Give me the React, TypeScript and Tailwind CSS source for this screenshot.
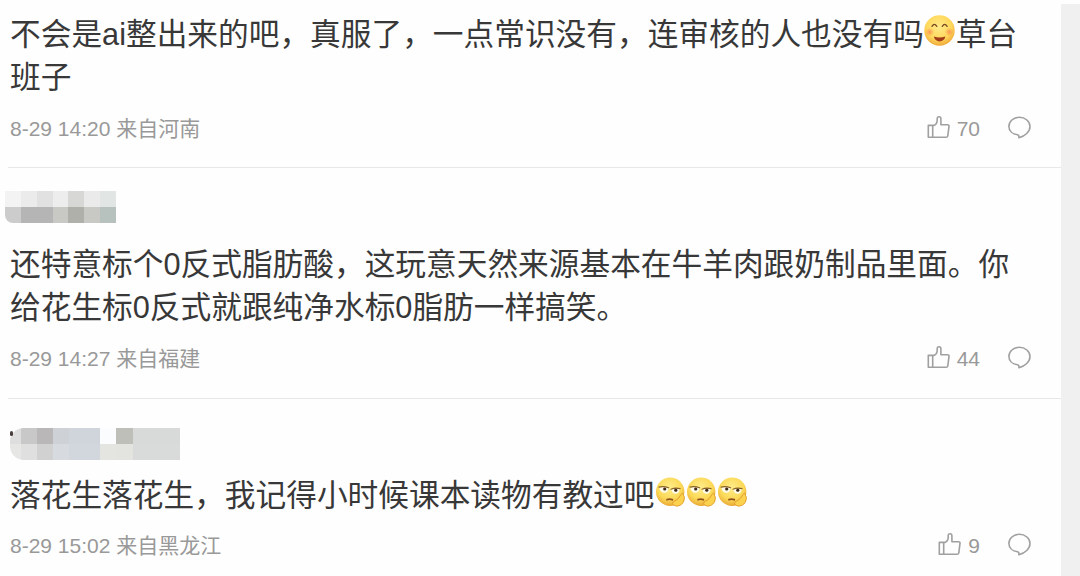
import React from 'react';
import { clsx } from 'clsx';

// --- Types ---
type Comment = {
  id: string;
  name?: React.ReactNode;
  body: React.ReactNode;
  meta: string;
  likes: number;
  className: string;
};

// --- Emoji ---
function SmileEmoji() {
  return (
    <svg viewBox="0 0 31 31" className="inline-block w-[31px] h-[31px] mr-px align-[-1px]">
      <defs>
        <radialGradient id="smile-face" cx="0.48" cy="0.38" r="0.62">
          <stop offset="0" stopColor="#ffe98a" />
          <stop offset="0.65" stopColor="#ffd95c" />
          <stop offset="1" stopColor="#f0a93a" />
        </radialGradient>
        <radialGradient id="smile-cheek">
          <stop offset="0" stopColor="#fa8752" stopOpacity="0.85" />
          <stop offset="1" stopColor="#fa9a52" stopOpacity="0" />
        </radialGradient>
      </defs>
      <circle cx="15.5" cy="15.5" r="15.2" fill="url(#smile-face)" />
      <circle cx="5.7" cy="17" r="4.5" fill="url(#smile-cheek)" />
      <circle cx="25.3" cy="17" r="4.5" fill="url(#smile-cheek)" />
      <path d="M8 11.4q2.4-4 4.8 0M18.3 11.4q2.4-4 4.8 0" fill="none" stroke="#7a4a22" strokeWidth="1.3" strokeLinecap="round" />
      <path d="M9.8 21.6q5.7 1.8 11.6 0q-1.2 4.8-5.8 4.8t-5.8-4.8z" fill="#a33c1b" />
    </svg>
  );
}

function EyerollEmoji() {
  return (
    <svg viewBox="0 0 31 31" className="inline-block w-[31px] h-[31px] align-[-2px]">
      <defs>
        <radialGradient id="roll-face" cx="0.48" cy="0.35" r="0.65">
          <stop offset="0" stopColor="#ffec8c" />
          <stop offset="0.65" stopColor="#fbd957" />
          <stop offset="1" stopColor="#e9a735" />
        </radialGradient>
      </defs>
      <circle cx="15.2" cy="14.8" r="14.2" fill="url(#roll-face)" />
      <path d="M4.3 10.2q4.5-1.2 9.2.6q-.4 5-4.3 5q-4.2-.2-4.9-5.6z" fill="#fffbea" />
      <path d="M16.2 12.2q4.5-1.6 8.6-.5q-.5 5-4.1 5.1q-3.6 0-4.5-4.6z" fill="#fffbea" />
      <path d="M4 10.2q4.5-1.2 9.6.6M16 12.2q4.3-1.8 9-.5" fill="none" stroke="#8a6224" strokeWidth="1.2" strokeLinecap="round" />
      <circle cx="9.7" cy="12" r="1.6" fill="#3f2a18" />
      <circle cx="20.8" cy="13.2" r="1.6" fill="#3f2a18" />
      <path d="M12 22.6q2.7-.9 5.3.1" fill="none" stroke="#90501d" strokeWidth="1.8" strokeLinecap="round" />
      <path
        d="M18.2 24.8q3.2-1.3 5.2-3.5q3-4.6 4-5.2q1.5-.2 1 2.3q1.4 1 .9 3.5q-.1 4-3.7 6.2q-3.5 2-6.4.3q-2.6-1.5-1-3.6z"
        fill="#fbd24e"
        stroke="#e0982f"
        strokeWidth="0.9"
      />
    </svg>
  );
}

// --- Icons ---
function LikeIcon() {
  return (
    <svg viewBox="0 0 24 24" className="w-6 h-6 -mt-1" fill="none" stroke="#a0a0a0" strokeWidth="1.6" strokeLinejoin="round">
      <path d="M2.3 10.4h4.4v11.9H2.3zM6.7 22.3V10.4h1.2c2-.7 3.3-3 3.3-5.1V3.6c0-2.5 3.7-2.5 3.7.3v5.9h6.7c1 0 1.6.6 1.4 1.6l-1.2 9.4c-.2 1-.7 1.5-1.6 1.5z" />
    </svg>
  );
}

function ReplyIcon() {
  return (
    <svg viewBox="0 0 24 24" className="w-6 h-6 -mt-1" fill="none" stroke="#a0a0a0" strokeWidth="1.6" strokeLinejoin="round">
      <path d="M10.6 19.8C5.4 19.1 1.9 15.8 1.9 11.5 1.9 6.4 6.4 2.3 12.3 2.3s10.7 4.1 10.7 9.2c0 5.2-5 9.6-11.1 11.3.3-1.4.2-2.4-1.3-3z" />
    </svg>
  );
}

// Pixelated user names
function MaskedNameA() {
  return (
    <div className="ml-[5px] w-[111px] h-8 grid grid-cols-7 grid-rows-2 overflow-hidden rounded-bl-lg">
      <i className="bg-[#f3f3f3]" />
      <i className="bg-[#ebebeb]" />
      <i className="bg-[#e1e1e1]" />
      <i className="bg-[#ededed]" />
      <i className="bg-[#d7d7d5]" />
      <i className="bg-[#e9eae9]" />
      <i className="bg-[#e1e5e4]" />
      <i className="bg-[#cccccc]" />
      <i className="bg-[#b5b5b5]" />
      <i className="bg-[#b5b5b5]" />
      <i className="bg-[#c8c8c5]" />
      <i className="bg-[#b0b0aa]" />
      <i className="bg-[#c8c9c5]" />
      <i className="bg-[#b7c1be]" />
    </div>
  );
}

function MaskedNameB() {
  return (
    <div className="relative ml-[10px] w-[170px] h-8">
      <div className="size-full grid grid-cols-[11px_16px_16px_16px_31px_16px_17px_47px] grid-rows-2 overflow-hidden rounded-l-[14px]">
        <i className="bg-[#dedede]" />
        <i className="bg-[#c8c8c9]" />
        <i className="bg-[#bab7b9]" />
        <i className="bg-[#ced1d6]" />
        <i className="bg-[#d0d5dc]" />
        <i className="bg-[#fafcfd]" />
        <i className="bg-[#bebfb9]" />
        <i className="bg-[#d8dada]" />
        <i className="bg-[#e6e6e5]" />
        <i className="bg-[#dfdfdf]" />
        <i className="bg-[#d1d1d1]" />
        <i className="bg-[#d7dade]" />
        <i className="bg-[#d2d7de]" />
        <i className="bg-[#e4e5e1]" />
        <i className="bg-[#e3e4e0]" />
        <i className="bg-[#d9dbda]" />
      </div>
      <i className="absolute left-0 top-[3px] w-[3px] h-[5px] rounded-sm bg-[#4a3d3d]" />
    </div>
  );
}

const COMMENTS: Comment[] = [
  {
    id: 'henan',
    body: (
      <>
        不会是ai整出来的吧，真服了，一点常识没有，连审核的人也没有吗
        <SmileEmoji />
        草台
        <br />
        班子
      </>
    ),
    meta: '8-29 14:20 来自河南',
    likes: 70,
    className: 'h-[168px] pt-[13px]',
  },
  {
    id: 'fujian',
    name: <MaskedNameA />,
    body: (
      <>
        还特意标个0反式脂肪酸，这玩意天然来源基本在牛羊肉跟奶制品里面。你
        <br />
        给花生标0反式就跟纯净水标0脂肪一样搞笑。
      </>
    ),
    meta: '8-29 14:27 来自福建',
    likes: 44,
    className: 'h-[231px] pt-[23px]',
  },
  {
    id: 'heilongjiang',
    name: <MaskedNameB />,
    body: (
      <>
        落花生落花生，我记得小时候课本读物有教过吧
        <span className="ml-px">
          <EyerollEmoji />
          <EyerollEmoji />
          <EyerollEmoji />
        </span>
      </>
    ),
    meta: '8-29 15:02 来自黑龙江',
    likes: 9,
    className: 'h-[177px] pt-[29px]',
  },
];

function CommentRow({ comment, last }: { comment: Comment; last: boolean }) {
  return (
    <article className={clsx('flex flex-col', comment.className)}>
      {comment.name}
      <p
        className={clsx(
          'pl-[10px] text-[30.7px] leading-[43px] text-[#383838] whitespace-nowrap',
          comment.name && (last ? 'mt-[14px]' : 'mt-5')
        )}
      >
        {comment.body}
      </p>
      <div
        className={clsx(
          'h-[30px] shrink-0 flex items-center pl-[10px] pr-[30px] text-[21px] leading-[30px] text-[#999999]',
          last ? 'mt-[14px]' : 'mt-[15px]'
        )}
      >
        <span>{comment.meta}</span>
        <span className="ml-auto flex items-center gap-[7px]">
          <LikeIcon />
          {comment.likes}
        </span>
        <span className="ml-[27px]">
          <ReplyIcon />
        </span>
      </div>
      {!last && <div className="mt-auto ml-2 h-px shrink-0 bg-[#e8e8e8]" />}
    </article>
  );
}

export default function App() {
  return (
    <div className="w-[1080px] h-[576px] flex overflow-hidden bg-[#fefefe] font-['Liberation_Sans','Noto_Sans_CJK_SC',sans-serif]">
      <main className="w-[1061px] shrink-0">
        {COMMENTS.map((comment, i) => (
          <CommentRow key={comment.id} comment={comment} last={i === COMMENTS.length - 1} />
        ))}
      </main>
      {/* Scrollbar track */}
      <div className="flex-1 mt-1 bg-[#f0f0f0]" />
    </div>
  );
}
